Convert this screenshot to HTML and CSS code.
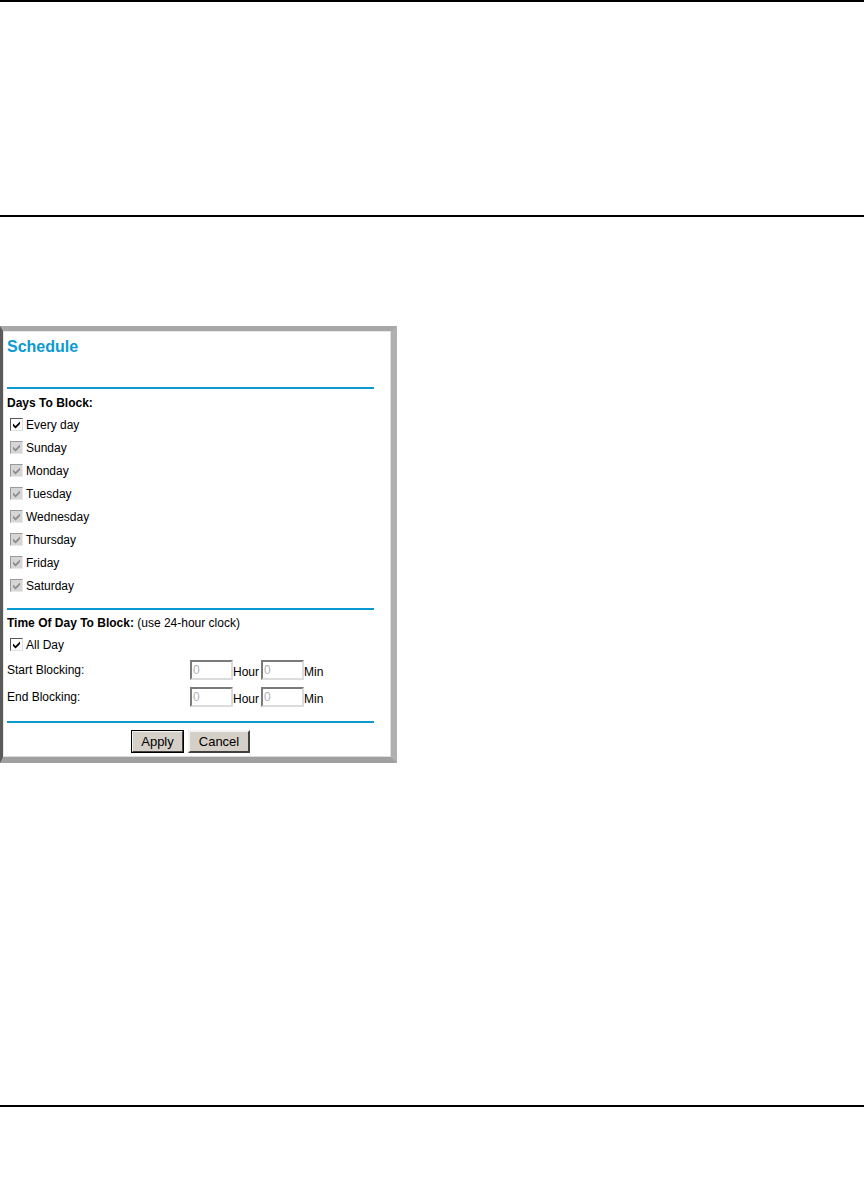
FILE: index.html
```html
<!DOCTYPE html>
<html lang="en">
<head>
    <meta charset="UTF-8">
    <title>Schedule</title>
    <link rel="stylesheet" href="styles.css">
</head>
<body>
    <div class="page">
        <div class="rule rule-top"></div>
        <div class="rule rule-mid"></div>

        <div class="shot">
            <div class="panel">
                <div class="title">Schedule</div>
                <div class="blue-rule"></div>

                <div class="heading">Days To Block:</div>
                <div class="check-row">
                    <span class="box"><svg viewBox="0 0 11 11"><path d="M2 4.5 L4.5 7 L9 2.5 L9 5 L4.5 9.5 L2 7 Z"/></svg></span>
                    Every day
                </div>
                <div class="check-row">
                    <span class="box off"><svg viewBox="0 0 11 11"><path d="M2 4.5 L4.5 7 L9 2.5 L9 5 L4.5 9.5 L2 7 Z"/></svg></span>
                    Sunday
                </div>
                <div class="check-row">
                    <span class="box off"><svg viewBox="0 0 11 11"><path d="M2 4.5 L4.5 7 L9 2.5 L9 5 L4.5 9.5 L2 7 Z"/></svg></span>
                    Monday
                </div>
                <div class="check-row">
                    <span class="box off"><svg viewBox="0 0 11 11"><path d="M2 4.5 L4.5 7 L9 2.5 L9 5 L4.5 9.5 L2 7 Z"/></svg></span>
                    Tuesday
                </div>
                <div class="check-row">
                    <span class="box off"><svg viewBox="0 0 11 11"><path d="M2 4.5 L4.5 7 L9 2.5 L9 5 L4.5 9.5 L2 7 Z"/></svg></span>
                    Wednesday
                </div>
                <div class="check-row">
                    <span class="box off"><svg viewBox="0 0 11 11"><path d="M2 4.5 L4.5 7 L9 2.5 L9 5 L4.5 9.5 L2 7 Z"/></svg></span>
                    Thursday
                </div>
                <div class="check-row">
                    <span class="box off"><svg viewBox="0 0 11 11"><path d="M2 4.5 L4.5 7 L9 2.5 L9 5 L4.5 9.5 L2 7 Z"/></svg></span>
                    Friday
                </div>
                <div class="check-row">
                    <span class="box off"><svg viewBox="0 0 11 11"><path d="M2 4.5 L4.5 7 L9 2.5 L9 5 L4.5 9.5 L2 7 Z"/></svg></span>
                    Saturday
                </div>

                <div class="blue-rule rule-days"></div>

                <div class="heading heading-time">Time Of Day To Block: <span class="note">(use 24-hour clock)</span></div>
                <div class="check-row">
                    <span class="box"><svg viewBox="0 0 11 11"><path d="M2 4.5 L4.5 7 L9 2.5 L9 5 L4.5 9.5 L2 7 Z"/></svg></span>
                    All Day
                </div>
                <div class="time-row first">
                    <span class="time-label">Start Blocking:</span>
                    <input class="time-input" type="text" value="0" disabled>
                    <span class="unit">Hour</span>
                    <input class="time-input" type="text" value="0" disabled>
                    <span class="unit">Min</span>
                </div>
                <div class="time-row">
                    <span class="time-label">End Blocking:</span>
                    <input class="time-input" type="text" value="0" disabled>
                    <span class="unit">Hour</span>
                    <input class="time-input" type="text" value="0" disabled>
                    <span class="unit">Min</span>
                </div>

                <div class="blue-rule rule-time"></div>

                <div class="buttons">
                    <button class="btn btn-apply">Apply</button>
                    <button class="btn btn-cancel">Cancel</button>
                </div>
            </div>
        </div>

        <div class="rule rule-bottom"></div>
    </div>
</body>
</html>
```

FILE: styles.css
```css
body {
    margin: 0;
    background: white;
    font-family: "Liberation Sans", Arial, sans-serif;
    color: #000;
}

.page {
    width: 864px;
}

.rule {
    height: 2px;
    background: #000;
}

.rule-mid {
    margin-top: 213px;
}

.rule-bottom {
    margin-top: 342px;
}

/* screenshot frame */
.shot {
    margin-top: 109px;
    width: 388px;
    height: 426px;
    border-top: 5px solid #a8a8a8;
    border-left: 3px solid #5a5a5a;
    border-right: 6px solid #b0b0b0;
    border-bottom: 6px solid #a0a0a0;
    box-shadow: inset 1px 1px 0 #e6e6e6, inset -1px -1px 0 #dcdcdc;
    background: white;
}

.panel {
    width: 367px;
    padding: 6px 0 0 4px;
    font-size: 12px;
}

.title {
    height: 20px;
    line-height: 20px;
    font-size: 16px;
    font-weight: bold;
    color: #0a9ad2;
}

.blue-rule {
    height: 2px;
    background: #0a9ad2;
    margin-top: 30px;
}

.heading {
    margin-top: 4px;
    height: 20px;
    line-height: 20px;
    font-weight: bold;
}

.note {
    font-weight: normal;
}

.check-row {
    height: 23px;
    display: flex;
    align-items: center;
    gap: 3px;
    padding-left: 3px;
}

.box {
    width: 11px;
    height: 11px;
    border: 1px solid;
    border-color: #555 #e0e0e0 #e0e0e0 #555;
    background: white;
    display: inline-flex;
}

.box svg {
    width: 11px;
    height: 11px;
    fill: #000;
}

.box.off {
    background: #d6d6d6;
    border-color: #9a9a9a #e8e8e8 #e8e8e8 #9a9a9a;
}

.box.off svg {
    fill: #8c8c8c;
}

.rule-days {
    margin-top: 11px;
}

.heading-time {
    margin-top: 3px;
}

.time-row {
    height: 20px;
    display: flex;
    align-items: center;
    margin-top: 7px;
}

.time-row.first {
    margin-top: 4px;
}

.time-label {
    width: 183px;
}

.time-input {
    width: 37px;
    height: 16px;
    padding: 0 1px;
    margin: 0;
    border: 2px solid;
    border-color: #7a7a7a #dcdcdc #dcdcdc #7a7a7a;
    background: white;
    font-family: "Liberation Sans", Arial, sans-serif;
    font-size: 12px;
    color: #b0b0b0;
}

.unit {
    margin: 0 2px 0 0;
    padding-top: 3px;
}

.rule-time {
    margin-top: 14px;
}

.buttons {
    margin-top: 7px;
    display: flex;
    justify-content: center;
    gap: 4px;
}

.btn {
    height: 23px;
    margin: 0;
    padding: 0 6px;
    background: #d4d0c8;
    border: 2px solid;
    border-color: #f4f4f4 #404040 #404040 #f4f4f4;
    font-family: "Liberation Sans", Arial, sans-serif;
    font-size: 13px;
    color: #000;
}

.btn-apply {
    width: 53px;
    outline: 1px solid #000;
    outline-offset: -1px;
}

.btn-cancel {
    width: 62px;
}
```
